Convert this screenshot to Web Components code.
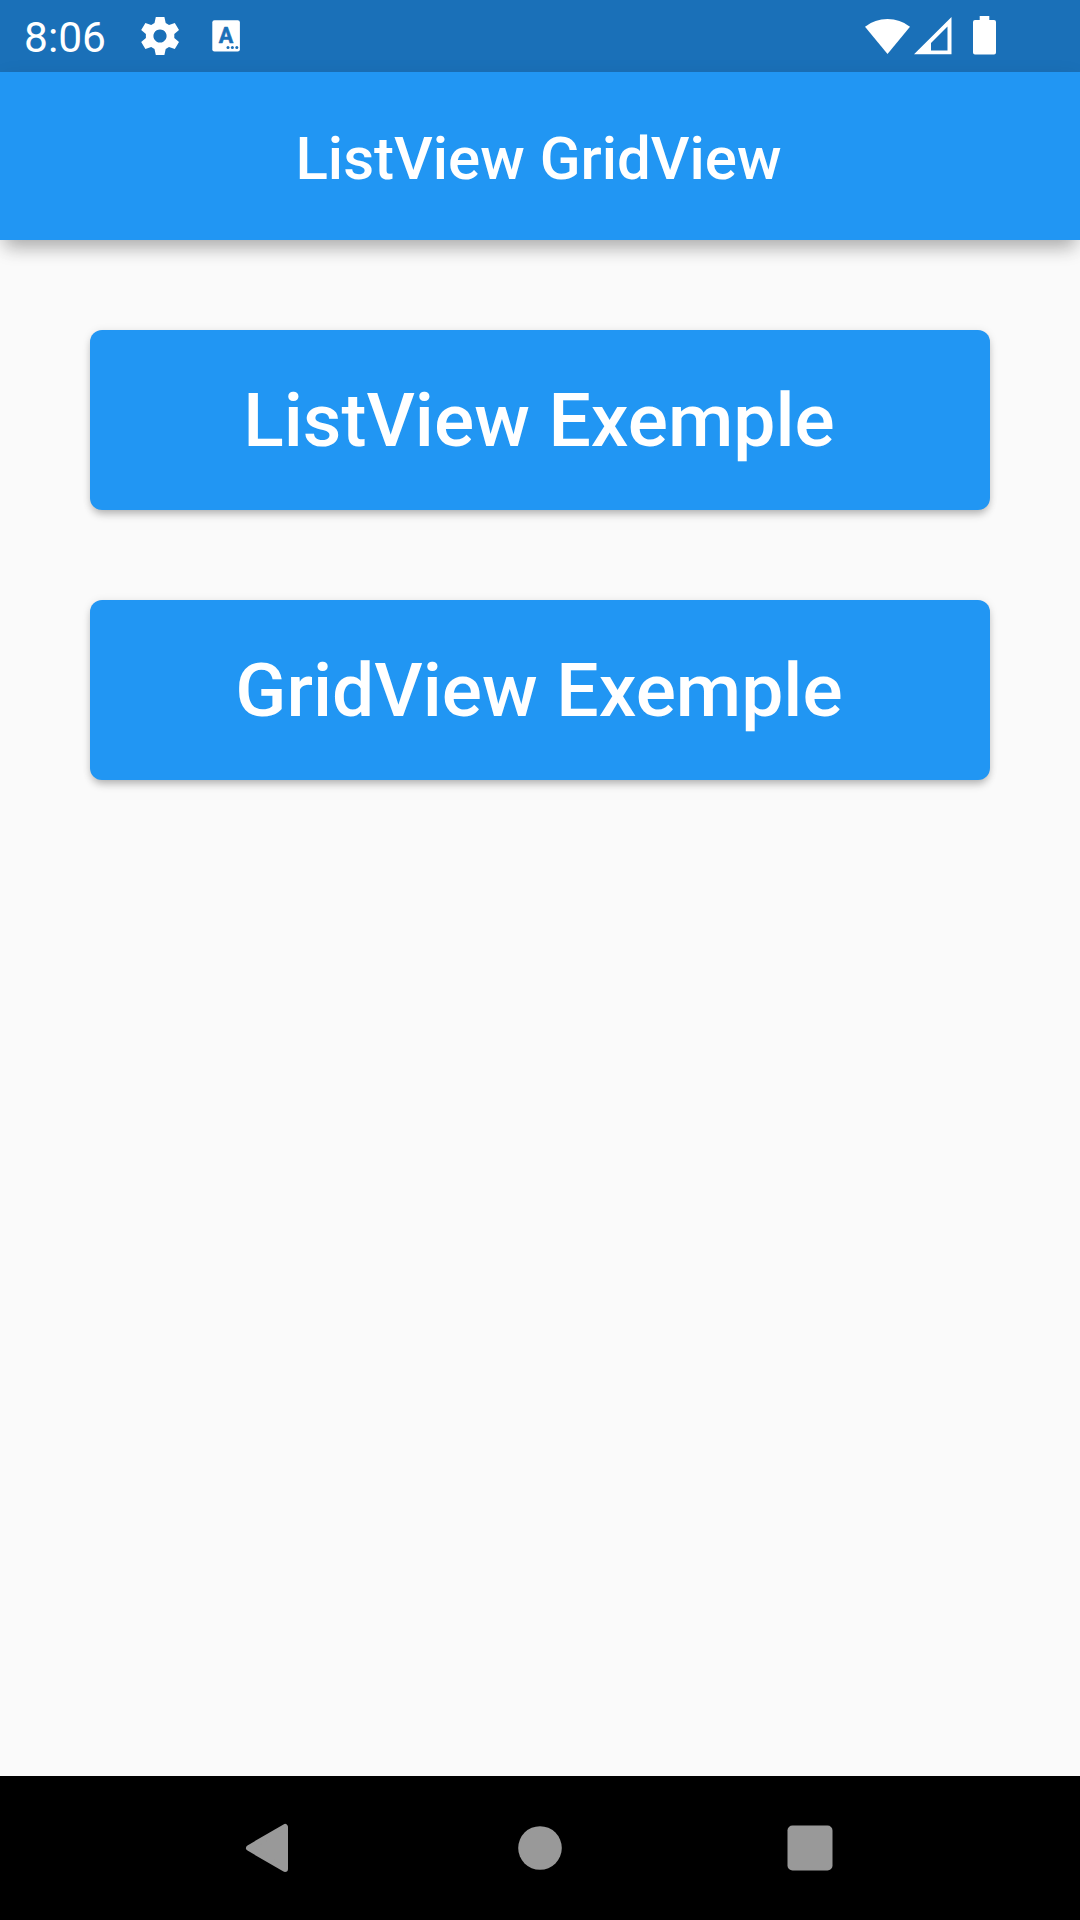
<!DOCTYPE html>
<html lang="en">
<head>
<meta charset="utf-8">
<title>ListView GridView</title>
<style>html,body{margin:0;height:100%;background:#fafafa}</style>
</head>
<body>
<phone-screen>
  <status-bar slot="status" time="8:06"></status-bar>
  <app-bar slot="header">ListView GridView</app-bar>
  <raised-button>ListView Exemple</raised-button>
  <raised-button>GridView Exemple</raised-button>
  <nav-bar slot="nav"></nav-bar>
</phone-screen>
<script>
const define = (name, html) => customElements.define(name, class extends HTMLElement {
  constructor() {
    super();
    this.attachShadow({ mode: "open" }).innerHTML = html;
  }
  connectedCallback() {
    const t = this.shadowRoot.querySelector(".time");
    if (t) t.textContent = this.getAttribute("time");
  }
});

define("phone-screen", `
<style>
:host{display:flex;flex-direction:column;width:1080px;height:1920px;background:#fafafa;overflow:hidden;font-family:Roboto,sans-serif;color:#fff}
main{flex:1;display:flex;flex-direction:column;gap:90px;padding:90px}
</style>
<slot name="status"></slot><slot name="header"></slot><main><slot></slot></main><slot name="nav"></slot>`);

define("status-bar", `
<style>
:host{display:flex;height:72px;background:#1a70b8;box-sizing:border-box;padding:0 82px 0 24px;justify-content:space-between}
div{display:flex}
.time{font-size:42.5px;line-height:75px;width:113px}
svg{display:block;fill:#fff}
.letter{font:700 21.5px Roboto,sans-serif;fill:#1a70b8;stroke:#1a70b8;stroke-width:.6px;stroke-linejoin:round}
</style>
<div>
  <span class="time"></span>
  <svg width="133" height="72" viewBox="137 0 133 72">
    <path fill-rule="evenodd" d="M155.8 17h8.6l1.3 6.1 3.3 1.8 5.8-2 4.2 7.1-4.7 4v4l4.7 4-4.2 7.1-5.8-2-3.3 1.8-1.3 6.1h-8.6l-1.3-6.1-3.3-1.8-5.8 2-4.2-7.1 4.7-4v-4l-4.7-4 4.2-7.1 5.8 2 3.3-1.8zM160 29.4a6.6 6.6 0 1 0 .01 0z"/>
    <rect x="212.3" y="20.3" width="27.6" height="31.2" rx="2.2"/>
    <text class="letter" x="225.9" y="43" text-anchor="middle">A</text>
    <g fill="#1a70b8"><circle cx="228" cy="47.6" r="1.5"/><circle cx="232.4" cy="47.6" r="1.5"/><circle cx="236.8" cy="47.6" r="1.5"/></g>
  </svg>
</div>
<svg width="133" height="72" viewBox="865 0 133 72">
  <path d="M865 26.7a37 37 0 0 1 45 0L887.5 54z"/>
  <path fill-rule="evenodd" d="M951.5 17v37.3H914zM947.5 26.5L931 43v7.5h16.5z"/>
  <path d="M979.7 16h9.6v4h4.7a2 2 0 0 1 2 2v30.6a2 2 0 0 1-2 2h-19a2 2 0 0 1-2-2V22a2 2 0 0 1 2-2h4.7z"/>
</svg>`);

define("app-bar", `
<style>
:host{display:flex;height:168px;align-items:center;justify-content:center;background:#2196f3;font-size:60px;font-weight:500;line-height:70px;position:relative;
box-shadow:0 13px 17px -5px rgba(0,0,0,.24),0 5px 20px -3px rgba(0,0,0,.13)}
span{padding:6px 3px 0 0}
</style><span><slot></slot></span>`);

define("raised-button", `
<style>
:host{display:block}
button{all:unset;display:flex;box-sizing:border-box;width:100%;height:180px;padding-right:2px;align-items:center;justify-content:center;border-radius:12px;background:#2196f3;color:#fff;font-size:75px;font-weight:500;line-height:88px;
box-shadow:0 6px 8px -2px rgba(0,0,0,.24),0 1px 9px 0 rgba(0,0,0,.1)}
</style><button><slot></slot></button>`);

define("nav-bar", `
<style>
:host{display:flex;height:144px;background:#000;justify-content:center}
svg{display:block;width:270px;height:144px;fill:#999;stroke:#999;stroke-linejoin:round}
</style>
<svg viewBox="135 1776 270 144"><path stroke-width="6" d="M249 1848L285 1827V1869z"/></svg>
<svg viewBox="405 1776 270 144"><circle cx="540" cy="1848" r="21.8" stroke="none"/></svg>
<svg viewBox="675 1776 270 144"><rect x="787.5" y="1825.5" width="45" height="45" rx="5" stroke="none"/></svg>`);
</script>
</body>
</html>
